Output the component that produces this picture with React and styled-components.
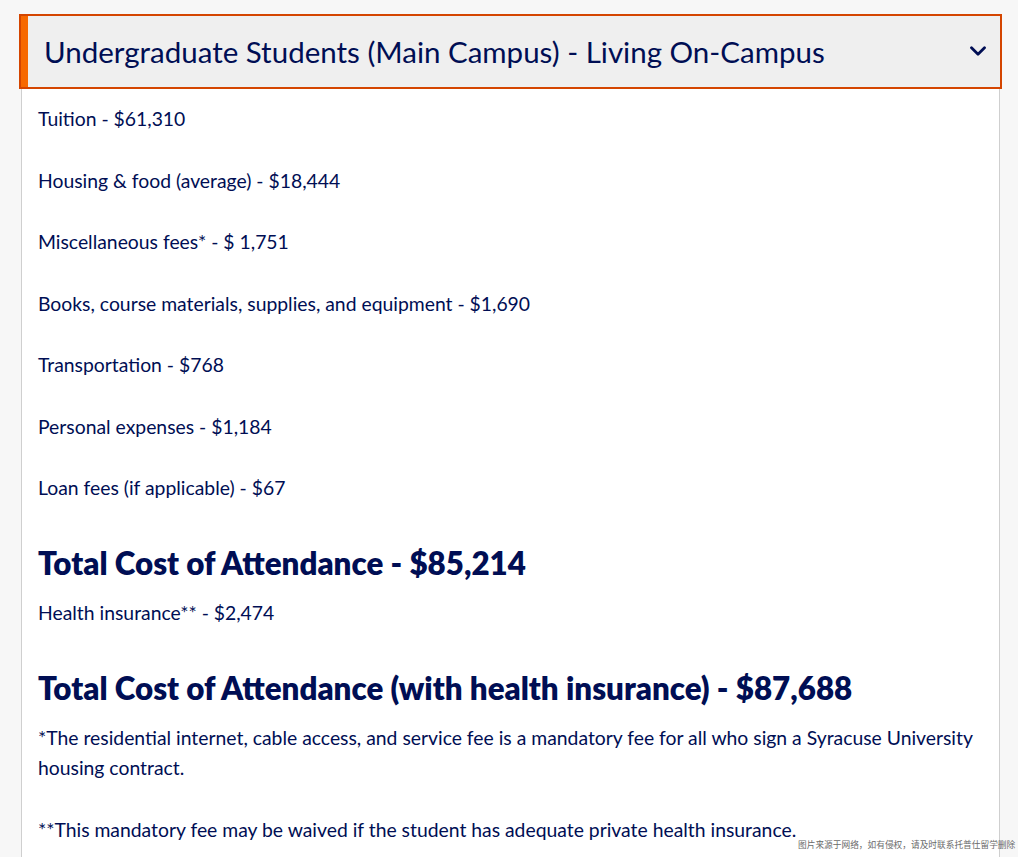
import React from 'react'
import styled, {createGlobalStyle} from 'styled-components'

const GlobalStyle = createGlobalStyle`
  html, body {
    margin: 0;
    padding: 0;
    background: #f7f7f7;
    overflow: hidden;
  }
  body {
    font-family: Lato, 'Noto Sans', sans-serif;
    color: #000e54;
  }
`

const costs = [
  'Tuition - $61,310',
  'Housing & food (average) - $18,444',
  'Miscellaneous fees* - $ 1,751',
  'Books, course materials, supplies, and equipment - $1,690',
  'Transportation - $768',
  'Personal expenses - $1,184',
  'Loan fees (if applicable) - $67',
]

const App = () => {
  return (
    <Page>
      <GlobalStyle />
      <Accordion>
        <Header>
          <Title>Undergraduate Students (Main Campus) - Living On-Campus</Title>
          <Chevron viewBox='0 0 16 11' aria-hidden='true'>
            <path d='M1.5 1.8 L8 8.3 L14.5 1.8' />
          </Chevron>
        </Header>
        <Panel>
          {costs.map(c => (
            <Line key={c}>{c}</Line>
          ))}
          <Total>Total Cost of Attendance - $85,214</Total>
          <Line>Health insurance** - $2,474</Line>
          <Total>Total Cost of Attendance (with health insurance) - $87,688</Total>
          <Line>
            *The residential internet, cable access, and service fee is a mandatory fee for all who sign a
            Syracuse University housing contract.
          </Line>
          <Line>**This mandatory fee may be waived if the student has adequate private health insurance.</Line>
        </Panel>
      </Accordion>
      <Watermark>图片来源于网络，如有侵权，请及时联系托普仕留学删除</Watermark>
    </Page>
  )
}

const Page = styled.div`
  position: relative;
  width: 1018px;
  height: 857px;
  padding: 14px 0 0 19px;
  box-sizing: border-box;
  overflow: hidden;
`

const Accordion = styled.div`
  width: 983px;
`

const Header = styled.div`
  display: flex;
  align-items: center;
  justify-content: space-between;
  height: 75px;
  box-sizing: border-box;
  padding: 0 14px 0 23px;
  background: #efefef;
  border: 2px solid #d44500;
  box-shadow: inset 7px 0 0 #f76900;
`

const Title = styled.h2`
  margin: 0;
  font-size: 29.5px;
  font-weight: 400;
  color: #000e54;
`

const Chevron = styled.svg`
  width: 16px;
  height: 11px;
  fill: none;
  stroke: #000e54;
  stroke-width: 2.8;
  stroke-linecap: round;
  stroke-linejoin: round;
`

const Panel = styled.div`
  margin: 0 2px;
  padding: 15px 16px 1px 16px;
  background: #fff;
  border-left: 1px solid #cfcfcf;
  border-right: 1px solid #cfcfcf;
  min-height: 800px;
`

const Line = styled.p`
  margin: 0 0 31.5px;
  font-size: 19.35px;
  line-height: 30px;
  color: #000e54;
`

const Total = styled.h3`
  margin: 41.5px 0 16.5px;
  font-size: 31.3px;
  line-height: 37px;
  font-weight: 800;
  color: #000e54;
`

const Watermark = styled.div`
  position: absolute;
  left: 798px;
  top: 839px;
  font-family: 'Noto Sans CJK SC', sans-serif;
  font-size: 8.7px;
  line-height: 12px;
  color: #6a6a6a;
  white-space: nowrap;
`

export default App
